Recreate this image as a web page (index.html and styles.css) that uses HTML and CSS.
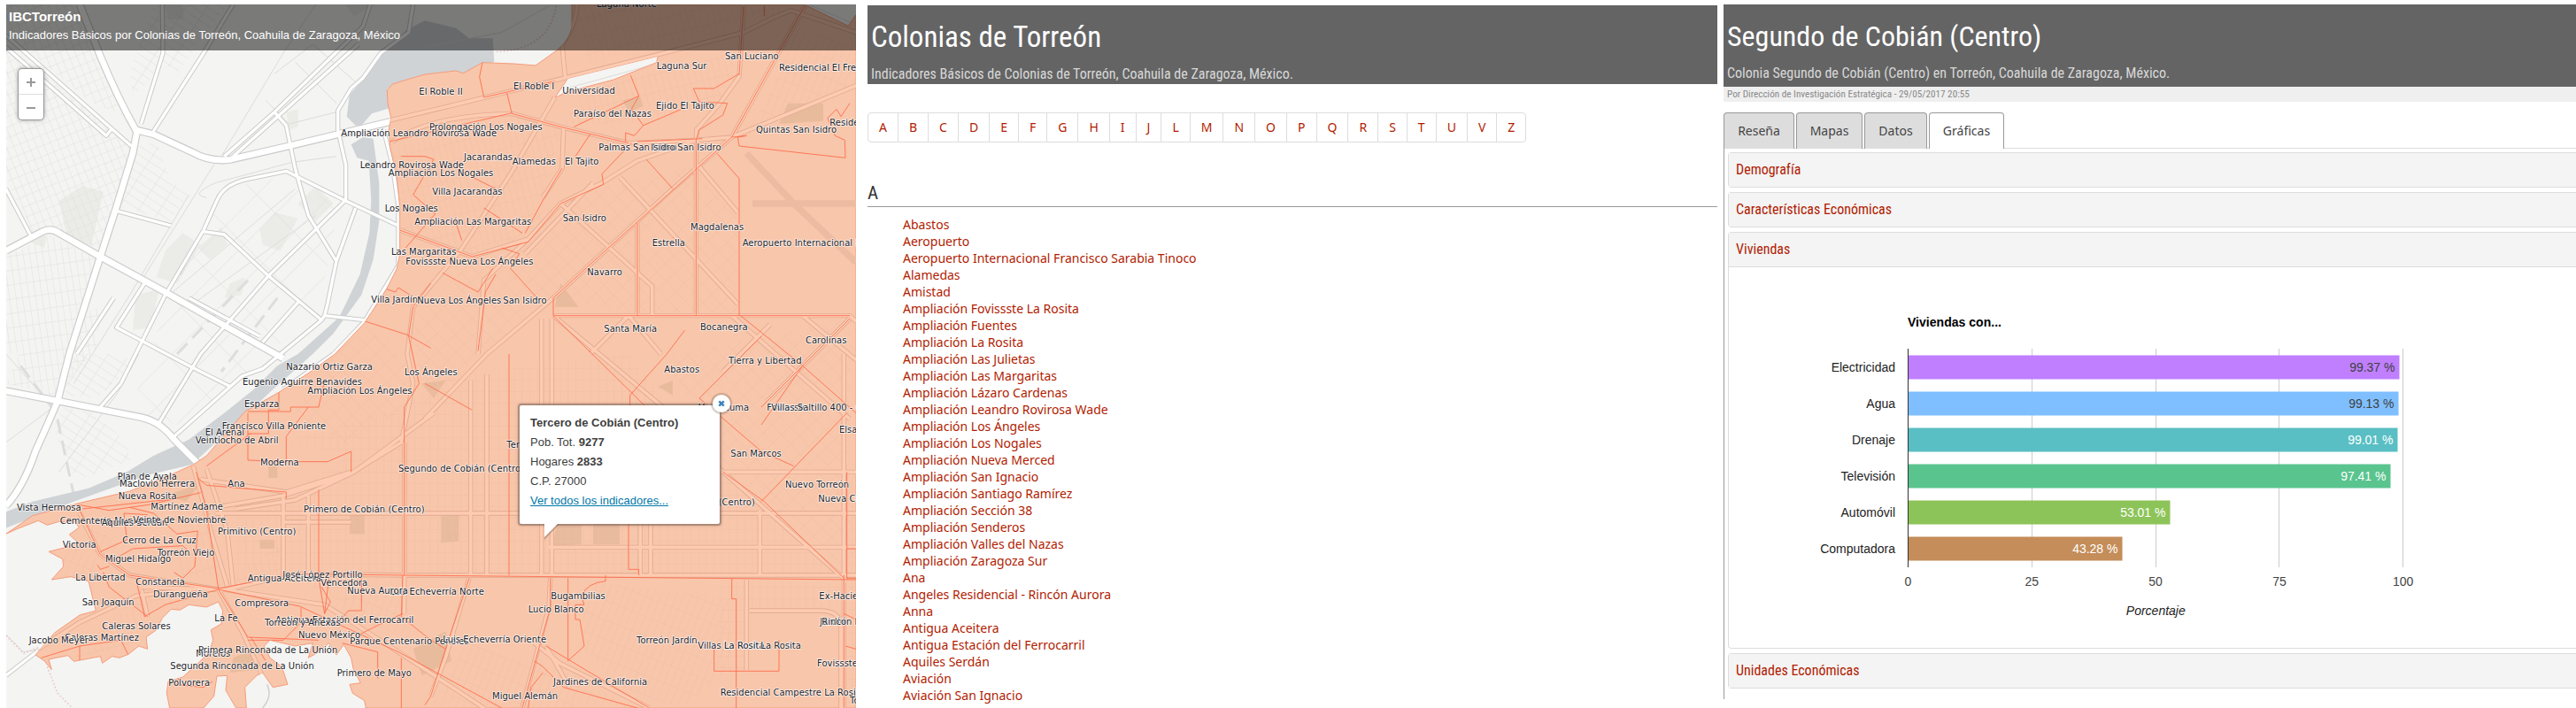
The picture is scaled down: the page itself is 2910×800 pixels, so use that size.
FILE: index.html
```html
<!DOCTYPE html>
<html lang="es">
<head>
<meta charset="utf-8">
<title>IBCTorreón</title>
<link rel="stylesheet" href="styles.css">
</head>
<body>
<main class="screens">
<section class="map-screen">
<svg class="map" viewBox="21 15 2880 2385" width="960" height="795">
<defs>
<pattern id="gridA" width="24" height="34" patternUnits="userSpaceOnUse" patternTransform="rotate(-22)"><path d="M0 0H24M0 0V34" class="lane"/></pattern>
<pattern id="gridB" width="22" height="48" patternUnits="userSpaceOnUse" patternTransform="rotate(-8)"><path d="M0 0H22M0 0V48" class="lane"/></pattern>
<pattern id="gridC" width="60" height="26" patternUnits="userSpaceOnUse" patternTransform="rotate(33)"><path d="M0 0H60M0 0V26" class="lane"/></pattern>
<pattern id="gridD" width="90" height="150" patternUnits="userSpaceOnUse" patternTransform="rotate(45)"><path d="M0 0H90M0 0V150" class="lane"/></pattern>
<pattern id="gridE" width="26" height="39" patternUnits="userSpaceOnUse"><path d="M0 0H26M0 0V39" class="olane"/></pattern>
<pattern id="gridF" width="40" height="46" patternUnits="userSpaceOnUse" patternTransform="rotate(-44)"><path d="M0 0H40M0 0V46" class="olane"/></pattern>
<pattern id="gridG" width="22" height="60" patternUnits="userSpaceOnUse" patternTransform="rotate(-14)"><path d="M0 0H22M0 0V60" class="olane"/></pattern>
<pattern id="gridH" width="24" height="62" patternUnits="userSpaceOnUse" patternTransform="rotate(22)"><path d="M0 0H24M0 0V62" class="olane"/></pattern>
<path id="land" fill-rule="evenodd" d="M1938 15V95Q1925 150 1860 190L1815 222 1740 216 1635 212 1570 248 1545 240 1440 252 1385 268 1330 285 1312 305 1314 350 1325 400 1318 440 1322 500 1345 600 1355 700V860L1345 910 1310 980 1235 1095 1135 1200 1060 1255 945 1330 830 1395 700 1545 655 1575 600 1600 440 1665 270 1705 110 1748 20 1810 60 1792 130 1765 160 1780 200 1768 255 1770 268 1788 235 1812 262 1838 225 1855 165 1870 212 1895 215 1920 175 1965 240 1955 300 1970 310 2010 325 2070 270 2085 235 2110 185 2145 120 2220 150 2240 175 2270 165 2235 230 2222 250 2242 340 2225 347 2248 380 2225 405 2230 435 2218 470 2190 500 2200 495 2160 530 2135 550 2095 580 2065 610 2068 640 2050 700 2058 740 2040 755 2070 750 2115 715 2135 722 2170 710 2210 680 2240 620 2295 570 2310 565 2350 575 2400H690L725 2360 735 2292 770 2290 765 2340 800 2400H835L830 2330 870 2290 890 2280 925 2330 975 2320 955 2260 915 2230 895 2190 915 2170 1000 2190 1060 2180 1045 2230 1080 2210 1115 2180 1140 2220 1165 2185 1190 2230 1198 2270 1222 2315 1185 2320 1195 2350 1235 2375 1240 2400H2901V50L2875 88 2725 15ZM1925 265 2230 190 2225 212 2080 270 1920 312 1880 332Z"/>
<clipPath id="landClip"><use href="#land" clip-rule="evenodd"/></clipPath>
<g id="westMajor"><path d="M270 15L340 190Q400 335 460 440L520 455 650 515Q710 550 780 541L1000 490 1325 412"/><path d="M465 440L450 520 395 700 340 870 235 1200 195 1360Q170 1420 120 1530 80 1650 20 1715"/><path d="M20 850L140 787Q170 770 200 790L340 870 560 990 700 1070 960 1215"/><path d="M20 1325L200 1360 480 1415Q545 1430 590 1490L670 1570"/></g>
<g id="westMinor"><path d="M550 15L552 180 478 420M790 15L690 180 520 445M20 120L445 495M20 160L360 460 376 440M1255 15L1230 90 930 380 760 530M1215 150L790 530M930 380L970 425 1000 570 1045 730 1140 885M1400 15L1385 110 1290 180 1230 265 1190 300 1145 375V440L1172 560V680"/><path d="M470 1180L560 1000 690 780 735 680Q760 620 850 605L970 580 1170 680 1350 765M690 785L760 795 910 935 1090 1085 1100 1070 1235 1085M1170 680L910 935 680 1200 535 1440M1205 705L1140 885 1110 1030 1100 1070M470 1180L410 1300 340 1380M395 715L580 765M20 640L105 800M490 960L395 1110 480 1155 640 1240 780 1310M385 1010L260 1200M1090 1085L890 1250 820 1275 590 1480M1010 1025L890 1160M1300 440L1330 560 1350 700V900L1235 1090 1130 1200 960 1320M640 1010L880 1140M20 2290L130 2205"/></g>
<g id="eastRoad"><path d="M1312 410L1480 370 1870 275 2230 185 2520 110 2620 60 2680 35 2901 110M1955 15Q1955 80 1905 150L1915 260M1330 480Q1460 390 1735 385L1900 430 2130 485 2360 475 2480 465 2901 290M2730 15L2480 465 2280 640 2040 860 1875 1010 1650 1200 1440 1420M2520 15L2505 260 2440 350 2360 440 2359 570V1070"/><path d="M1875 1070H2880L2901 1090M1355 780L1600 870 1790 810 1900 690 2040 620 2160 545 2360 475M1880 330L1730 590 1560 850 1400 1040 1380 1200 1400 1300 1360 1500 1180 1610 960 1680 700 1725M1910 430L1905 570 1840 670M1790 810L1640 950 1620 1200M1900 690L2210 970V1070M2100 600L2500 1030M2370 565L2500 720M2010 620L1780 860M2160 750V1070M1875 1070L2270 1400 2440 1590 2870 1970M2240 1200L2130 1070 2000 1200M2480 1070L2880 1420M2610 1100L2450 1260M2720 1070L2901 1220M2880 1080L2600 1360"/><path d="M960 1685V1950M1045 1680V1940M1370 1500V2080M1595 1290V1950M1650 1270V1950M1835 1080V1950M1870 1080V1950M2170 1500V1950M2205 1600V1950M2575 1730V1950M2860 1200V2400M730 1740H1370M960 1740H2901M960 1770H1190M1860 1855H2901M2440 1600H2901M1370 1950H2901M480 1990L760 2000 1000 1945 1370 1950"/><path d="M655 1580L720 1820 770 1985M700 1590L770 1800 790 1985M680 1625L970 1668 1190 1600M800 1725L1000 1695 1200 1600 1470 1400M270 1740L340 1880 440 1950 740 1998 820 2140 880 2270 905 2340M770 2000L1100 2050 1350 2210 1640 2400M130 2200L270 2110 460 2020 650 1998M1590 1960L1510 2230 1460 2360M1865 1960L1860 2060 1770 2400M1810 2180L1900 2250 2200 2400M2530 1965V2270M2540 2070H2780Q2845 2070 2850 2120V2400M1930 2330L1850 2190M480 2000L500 2090"/></g>
</defs>
<rect x="21" y="15" width="2880" height="2385" class="ground"/>
<g class="blocks"><path d="M1170 15h100l-70 40zM200 680l80-50 70 20-40 180-80-10zM560 850l60-60 60 40-80 130-70-20zM880 780l50-60 80 20-60 110-60-20zM1010 690l60-60 60 60-60 60zM970 380l40-10v60l-30 10zM100 790l60 10-10 40-50-20zM780 960l50-20-10 60-60 10zM670 840l80-70 20 60-60 50zM460 1000l80-20-30 130-60 10zM560 15l60 0 0 50-50 0z"/></g>
<path fill="url(#gridA)" d="M21 150L160 260 440 500 390 690 340 850 180 770 110 790 21 600ZM21 15H260L330 200 430 400 300 340 21 110Z"/>
<path fill="url(#gridB)" d="M21 870L170 800 330 880 240 1170 21 1200ZM90 1150L340 1040 330 1180 180 1340 21 1300Z"/>
<path fill="url(#gridC)" d="M240 1200L400 1200 460 1230 330 1350 220 1340ZM210 1380L320 1400 430 1500 440 1560 260 1630 190 1480ZM450 500L530 480 580 620 650 640 580 750 400 700ZM520 15L770 15 600 250 560 220 450 330 440 250Z"/>
<path fill="url(#gridD)" d="M760 640L960 600 1150 690 1080 1050 640 1450 440 1400 570 1010Z"/>
<path class="thin" d="M750 530L960 180 1070 15M640 660L440 1000 250 1300M730 550L480 950M700 670Q640 660 730 620L990 550 1140 530M930 250L1060 150 1230 300M1000 210L1140 350M900 340L980 420 1140 380M20 2150L80 2210 140 2200M20 1500L180 1380 20 1200M550 1020L1000 640M640 1040L1070 730M470 1200L400 1330 200 1600"/>
<path class="rail" d="M70 1240L190 1400 255 1700M660 830L610 930M840 950L600 1200M940 1010L750 1260"/>
<path class="water" d="M1380 100L1440 70 1545 95 1590 130 1670 130 1675 210 1570 248 1440 252 1312 300 1325 365 1260 385 1225 425 1205 425 1175 395 1185 320 1240 260 1290 180ZM1190 490L1230 465 1265 470 1285 620V750L1265 880 1225 1000 1130 1130 1060 1200 925 1320 840 1400 650 1575 500 1610 250 1700 20 1790V1735L110 1700 300 1655 430 1600 520 1545 640 1490 760 1400 860 1320 940 1240 1010 1200 1150 1075 1220 930 1252 790 1258 680 1250 545 1210 535Z"/>
<path class="trail" d="M1885 20Q1860 170 1680 175M21 2155L80 2215 130 2195M160 2260L195 2350 245 2400"/>
<use href="#westMinor" class="case-minor"/><use href="#westMajor" class="case-major"/><use href="#westMinor" class="fill-minor"/><use href="#westMajor" class="fill-major"/>
<path class="thin" d="M1920 300L2228 215M2740 15L2880 75M1440 160L1700 110 1860 20"/>
<use href="#land" class="land"/>
<g clip-path="url(#landClip)">
<path class="park" d="M2670 350h120v60l-150 10zM2110 340l60-10 10 30-50 20zM1185 1740h50v70h-50zM1495 1750l60-5v90l-60 5zM1885 1780h85v65l-95 5zM2010 1765h90v80h-90zM1400 2200l110-60 20 100-100 50zM910 1580h30v40h-30zM680 1640l-120 40 70 20zM1880 1040l20-80 60 80zM880 1830h50v30h-50zM1430 1300l80-10-40 60zM2230 1310l50-20v50zM790 2230l70-30 10 70-90 10z"/>
<path class="runway" d="M2530 520L2690 690 2901 890M2550 690H2901"/>
<path fill="url(#gridE)" d="M960 1500L1370 1380 1500 1280 2130 1200 2420 1580 2860 1960H960V1680L1190 1540ZM800 1720H960V1920L790 1940Z"/>
<path fill="url(#gridF)" d="M1100 1230L1240 1110 1380 1200 1370 1380 1180 1510 980 1400ZM1910 670L2360 560 2500 700V1060H2150L1880 1010 1640 1190 1440 1380 1390 1100 1600 880ZM2250 1210L2880 1080V1950L2450 1560Z"/>
<path fill="url(#gridG)" d="M1330 500L1735 390 1900 440 1840 660 1780 790 1600 860 1350 770ZM1950 20L2700 20 2460 110 1990 210ZM1990 300L2510 170 2430 360 2200 420 1900 420ZM730 1990L960 1840 960 1950ZM470 2000L720 2010 500 2080 440 2200 250 2230ZM590 1720L730 1740 760 1950 600 1960Z"/>
<path fill="url(#gridH)" d="M2000 1970L2470 2030 2480 2270 2300 2400 2100 2330 1960 2180ZM1580 2180L1980 2300 2130 2400H1460ZM2700 100L2901 150V280L2540 440ZM270 1760L430 1860 320 1880ZM1100 2060L1350 1960 1400 2170ZM230 1840L340 1900 320 2010 200 1950Z"/>
<path fill="url(#gridE)" d="M2430 1970H2850L2840 2060 2540 2060V2270H2430ZM1000 1960L1300 1960 1200 2060ZM2880 1580L2901 1700V2400H2870Z"/>
<use href="#eastRoad" class="case-east"/><use href="#eastRoad" class="fill-east"/>
<path class="limit" d="M1635 212L1625 260 1640 330 1880 275M1718 315L1735 385 1900 430 2130 485M1320 480L1735 383M2137 255L2165 325 1945 430M2165 325L2140 370 2180 425 2240 400 2310 370M2180 425L2150 460 2120 450V480M2505 250L2420 300 2350 300 2370 345 2465 350 2450 390 2370 440 2359 475V1070M2520 20L2505 255M2590 20V55M2730 15L2480 465 2040 860 1875 1010V1070M2480 465L2530 460 2500 465 2505 495 2865 535 2863 475 2830 460 2805 400 2835 370 2850 395 2880 350"/>
<path class="limit" d="M1360 530L1440 530 1470 540 1400 660 1475 725 1375 840M2160 480L2380 470M2000 455L1950 530M2140 485L2040 590 2045 625 1900 690 1790 820 1600 870 1355 780M1905 570L1845 670 1780 790M1600 600L1680 640M1640 705L1770 790M1540 740L1565 815M1700 840L1760 860 1730 910 1820 1010M1500 925L1620 990 1670 910M1310 980L1340 990 1350 975 1390 1000M1240 1090L1380 1135 1460 1180M1460 960L1400 1040 1385 1140 1420 1300 1370 1380 1370 1950M1620 1190L1645 990 1680 930M2160 755V1070M2430 520L2505 605V1070H1875M2505 1070H2880M2190 540L2280 640M1875 1070L2200 1390M1440 1300L1600 1390M2320 1120L2260 1200 2135 1340V1480M2510 1070L2720 1240 2901 1400M2580 1140L2370 1350 2580 1530 2690 1580M2880 1080L2580 1380M2720 1240L2580 1440M2870 1400L2580 1700"/>
<path class="limit" d="M945 1330V1390H910V1470H840V1560L970 1565 1110 1565 1190 1530V1600M840 1400V1470M970 1560V1480L1045 1380 985 1380 985 1395 840 1395M1045 1380L1080 1380 1100 1290M700 1580L740 1550 850 1470M670 1620L700 1645 970 1668V1690M665 1600L700 1730 740 1995M260 1710L370 1730 510 1710 680 1670M280 1725L600 1690M270 1730L340 1880 440 1950 740 1995 1000 1945 1370 1950 2901 1965M440 1720L520 1740 600 1810 670 1800 660 1920 620 1960 590 1940M340 1870L430 1830 420 1740 500 1745M380 1900L450 1860 620 1850 640 1870M370 1920L340 1930 330 1915M350 1940L370 1990 500 2090M460 1960L490 2090 560 2050 740 1998 840 2160 1080 2170M1080 1660V1960L1100 2080 1120 2040 1090 1990M740 1998L1015 2055 1350 2210 1700 2400M1020 2060V2110L960 2170H840M1225 1960V2070H1180L1140 2120M1365 2080L1280 2120 1220 2150M1160 2180L1280 2210V2300M1360 2230V2400M1365 1950L1360 2090 1460 2170 1510 2200M1115 1960L1100 2080M140 2230L270 2190 270 2240M270 2190L410 2170 435 2220M640 2260L590 2320 690 2330 720 2310M850 2160L900 2240"/>
<path class="limit" d="M1725 1200V1950M1590 1960L1510 2200 1460 2360 1440 2390M1865 1960V2060L1770 2400M1925 1960V2240L1980 2190 1965 2100H1950V2050H1980L1970 2020Q1990 1975 2052 1970V1950M2130 1760V1930H2165V1950M2480 1960V2030H2495V2270L2495 2400M2420 2200V2275H2640V2170M2860 1950V2400M2870 1600V1960H2901M2870 1860H2901M2860 2080L2901 2100M2865 2190L2901 2200M1850 2190L2200 2400M1810 2240L1840 2260 1910 2330 2160 2400M1840 2280L1800 2330 1790 2400M2450 1600L2590 1700 2860 1960"/>
</g>
<path class="road-edge" d="M905 2320Q925 2360 890 2400"/>
<g class="labels">
<text x="1420" y="321">El Roble II</text><text x="1156" y="462">Ampliación Leandro Rovirosa Wade</text><text x="1220" y="569">Leandro Rovirosa Wade</text><text x="1316" y="598">Ampliación Los Nogales</text><text x="1304" y="716">Los Nogales</text><text x="1405" y="761">Ampliación Las Margaritas</text><text x="1326" y="864">Las Margaritas</text><text x="1375" y="896">Fovissste Nueva Los Ángeles</text><text x="1258" y="1026">Villa Jardín</text><text x="1414" y="1028">Nueva Los Ángeles</text>
<g transform="translate(1440 0)"><text x="582" y="24">Laguna Norte</text><text x="300" y="304">El Roble I</text><text x="466" y="318">Universidad</text><text x="785" y="234">Laguna Sur</text><text x="1017" y="202">San Luciano</text><text x="1200" y="239">Residencial El Fresno</text><text x="504" y="395">Paraíso del Nazas</text><text x="783" y="368">Ejido El Tajito</text><text x="15" y="442">Prolongación Los Nogales</text><text x="1122" y="450">Quintas San Isidro</text><text x="1372" y="426">Residencial</text><text x="589" y="509">Palmas San Isidro</text><text x="766" y="509">Isidro</text><text x="856" y="510">San Isidro</text><text x="132" y="542">Jacarandas</text><text x="296" y="557">Alamedas</text><text x="474" y="557">El Tajito</text><text x="25" y="659">Villa Jacarandas</text><text x="467" y="751">San Isidro</text><text x="900" y="781">Magdalenas</text><text x="770" y="834">Estrella</text><text x="1076" y="835">Aeropuerto Internacional Francisco</text><text x="550" y="932">Navarro</text><text x="265" y="1030">San Isidro</text><text x="607" y="1125">Santa María</text><text x="933" y="1118">Bocanegra</text><text x="1290" y="1163">Carolinas</text></g>
<g transform="translate(0 1200)"><text x="970" y="54">Nazario Ortiz Garza</text><text x="822" y="104">Eugenio Aguirre Benavides</text><text x="1042" y="136">Ampliación Los Ángeles</text><text x="1371" y="71">Los Ángeles</text><text x="828" y="180">Esparza</text><text x="695" y="275">El Arenal</text><text x="752" y="254">Francisco Villa Poniente</text><text x="662" y="302">Veintiocho de Abril</text><text x="882" y="378">Moderna</text><text x="1350" y="398">Segundo de Cobián (Centro)</text><text x="398" y="425">Plan de Ayala</text><text x="405" y="450">Maclovio Herrera</text><text x="772" y="451">Ana</text><text x="401" y="491">Nueva Rosita</text><text x="57" y="530">Vista Hermosa</text><text x="511" y="529">Martínez Adame</text><text x="1029" y="536">Primero de Cobián (Centro)</text><text x="203" y="575">Cementerio Municipal</text><text x="344" y="583">Aquiles Serdán</text><text x="451" y="573">Veinte de Noviembre</text><text x="738" y="613">Primitivo (Centro)</text><text x="415" y="641">Cerro de La Cruz</text><text x="212" y="656">Victoria</text><text x="357" y="705">Miguel Hidalgo</text><text x="533" y="684">Torreón Viejo</text><text x="256" y="767">La Libertad</text><text x="460" y="783">Constancia</text><text x="839" y="771">Antigua Aceitera</text><text x="958" y="759">José López Portillo</text><text x="1087" y="786">Vencedora</text><text x="1319" y="817">Luis Echeverría Norte</text><text x="1177" y="812">Nueva Aurora</text><text x="519" y="824">Durangueña</text><text x="278" y="851">San Joaquín</text><text x="796" y="854">Compresora</text><text x="727" y="906">La Fe</text><text x="933" y="912">Antigua Estación del Ferrocarril</text><text x="897" y="920">Torreón y Anexas</text><text x="346" y="934">Caleras Solares</text><text x="219" y="972">Caleras Martínez</text><text x="98" y="980">Jacobo Meyer</text><text x="1011" y="963">Nuevo México</text><text x="1186" y="985">Parque Centenario Peñoles</text><text x="664" y="1026">Morelos</text><text x="672" y="1013">Primera Rinconada de La Unión</text><text x="577" y="1069">Segunda Rinconada de La Unión</text><text x="571" y="1125">Polvorera</text><text x="1142" y="1091">Primero de Mayo</text></g>
<g transform="translate(1440 1200)"><text x="1029" y="32">Tierra y Libertad</text><text x="811" y="64">Abastos</text><text x="925" y="191">Moctezuma</text><text x="1159" y="191">Fovissste</text><text x="1174" y="191">Villas Saltillo 400 - Oriente</text><text x="1404" y="267">Elsa Hernández</text><text x="277" y="319">Tercero de Cobián</text><text x="1036" y="348">San Marcos</text><text x="1221" y="454">Nuevo Torreón</text><text x="1333" y="501">Nueva California</text><text x="724" y="512">Cuarto de Cobián (Centro)</text><text x="427" y="830">Bugambilias</text><text x="1336" y="830">Ex-Hacienda</text><text x="350" y="876">Lucio Blanco</text><text x="1339" y="919">Jardín</text><text x="1345" y="919">Rincón La Rosita</text><text x="61" y="977">Luis Echeverría Oriente</text><text x="717" y="980">Torreón Jardín</text><text x="925" y="998">Villas La Rosita</text><text x="1014" y="998">La Rosita</text><text x="1138" y="998">La Rosita</text><text x="1329" y="1060">Fovissste</text><text x="435" y="1122">Jardines de California</text><text x="1001" y="1159">Residencial Campestre La Rosita</text><text x="228" y="1170">Miguel Alemán</text><text x="1440" y="1186">Torreón</text></g>
</g>
</svg>
<div class="map-title"><h1>IBCTorreón</h1><p>Indicadores Básicos por Colonias de Torreón, Coahuila de Zaragoza, México</p></div>
<div class="zoom"><svg class="zoom-icon" viewBox="0 0 28 28"><path d="M9 15h10M14 10v10"/></svg><svg class="zoom-icon" viewBox="0 0 28 28"><path d="M9 15h10"/></svg></div>
<div class="popup">
<p><b>Tercero de Cobián (Centro)</b></p><p>Pob. Tot. <b>9277</b></p><p>Hogares <b>2833</b></p><p>C.P. 27000</p><p><a href="#">Ver todos los indicadores...</a></p>
<svg class="popup-tip" viewBox="0 0 18 20"><path class="tip-shade" d="M1 0L1 18 18 0"/><path class="tip-fill" d="M1 0V15L16 0Z"/></svg>
<svg class="popup-close" viewBox="0 0 20 20"><path d="M7.3 7.3l5.4 5.4M12.7 7.3l-5.4 5.4"/></svg>
</div>
</section>

<section class="list-screen">
<header class="banner"><h1>Colonias de Torreón</h1><p>Indicadores Básicos de Colonias de Torreón, Coahuila de Zaragoza, México.</p></header>
<nav class="letters"><a>A</a><a>B</a><a>C</a><a>D</a><a>E</a><a>F</a><a>G</a><a>H</a><a>I</a><a>J</a><a>L</a><a>M</a><a>N</a><a>O</a><a>P</a><a>Q</a><a>R</a><a>S</a><a>T</a><a>U</a><a>V</a><a>Z</a></nav>
<h2 class="letter-heading">A</h2>
<ul class="names"><li>Abastos</li><li>Aeropuerto</li><li>Aeropuerto Internacional Francisco Sarabia Tinoco</li><li>Alamedas</li><li>Amistad</li><li>Ampliación Fovissste La Rosita</li><li>Ampliación Fuentes</li><li>Ampliación La Rosita</li><li>Ampliación Las Julietas</li><li>Ampliación Las Margaritas</li><li>Ampliación Lázaro Cardenas</li><li>Ampliación Leandro Rovirosa Wade</li><li>Ampliación Los Ángeles</li><li>Ampliación Los Nogales</li><li>Ampliación Nueva Merced</li><li>Ampliación San Ignacio</li><li>Ampliación Santiago Ramírez</li><li>Ampliación Sección 38</li><li>Ampliación Senderos</li><li>Ampliación Valles del Nazas</li><li>Ampliación Zaragoza Sur</li><li>Ana</li><li>Angeles Residencial - Rincón Aurora</li><li>Anna</li><li>Antigua Aceitera</li><li>Antigua Estación del Ferrocarril</li><li>Aquiles Serdán</li><li>Aviación</li><li>Aviación San Ignacio</li></ul>
</section>

<section class="detail-screen">
<header class="banner"><h1>Segundo de Cobián (Centro)</h1><p>Colonia Segundo de Cobián (Centro) en Torreón, Coahuila de Zaragoza, México.</p></header>
<p class="byline">Por Dirección de Investigación Estratégica - 29/05/2017 20:55</p>
<nav class="tabs"><a class="tab tab-resena">Reseña</a><a class="tab tab-mapas">Mapas</a><a class="tab tab-datos">Datos</a><a class="tab tab-active">Gráficas</a></nav>
<div class="tab-body">
<div class="card"><h3>Demografía</h3></div>
<div class="card"><h3>Características Económicas</h3></div>
<div class="card"><h3>Viviendas</h3>
<svg class="chart" width="957" height="430" viewBox="1953 302 957 430">
<text class="chart-title" x="2155" y="369" textLength="106">Viviendas con...</text>
<path class="grid" d="M2295.5 394V641M2435.5 394V641M2574.5 394V641M2714.5 394V641"/>
<g><rect x="2156" y="401.5" width="554.5" height="27" fill="#bf7fff"/><rect x="2156" y="442.5" width="553.5" height="27" fill="#7fbfff"/><rect x="2156" y="483.5" width="552.5" height="27" fill="#59bfc4"/><rect x="2156" y="524.5" width="544.5" height="27" fill="#59c48e"/><rect x="2156" y="565.5" width="295.5" height="27" fill="#8dc459"/><rect x="2156" y="606.5" width="241.5" height="27" fill="#c48d59"/></g>
<path class="axis" d="M2155.5 394V641"/>
<g class="cats"><text x="2141" y="420">Electricidad</text><text x="2141" y="461">Agua</text><text x="2141" y="502">Drenaje</text><text x="2141" y="543">Televisión</text><text x="2141" y="584">Automóvil</text><text x="2141" y="625">Computadora</text></g>
<g class="vals"><text class="dark" x="2705.5" y="420">99.37 %</text><text class="dark" x="2704.5" y="461">99.13 %</text><text x="2703.5" y="502">99.01 %</text><text x="2695.5" y="543">97.41 %</text><text x="2446.5" y="584">53.01 %</text><text x="2392.5" y="625">43.28 %</text></g>
<g class="ticks"><text x="2155.5" y="662">0</text><text x="2295.3" y="662">25</text><text x="2435" y="662">50</text><text x="2575" y="662">75</text><text x="2714.7" y="662">100</text></g>
<text class="axis-title" x="2435.3" y="695">Porcentaje</text>
</svg>
</div>
<div class="card"><h3>Unidades Económicas</h3></div>
</div>
</section>
</main>
</body>
</html>
```
FILE: styles.css
```css
*{box-sizing:border-box}
body{margin:0;background:#fff;overflow:hidden}
h1,h2,h3,p,ul{margin:0;padding:0;font-weight:400}
.screens{display:grid;grid-template-columns:960px 960px 963px;column-gap:0;padding-left:7px;height:800px;overflow:hidden}
.map-screen{position:relative;margin-top:5px;height:795px;overflow:hidden}
.map{display:block}
.ground{fill:#f4f4f2}
.water{fill:#cfd3d6}
.blocks{fill:#ebece7}
.lane{fill:none;stroke:#dfdfde;stroke-width:3}
.olane{fill:none;stroke:#efbda3;stroke-width:2.4}
.thin{fill:none;stroke:#dcdcdb;stroke-width:3}
.rail{fill:none;stroke:#dcdddd;stroke-width:9;stroke-dasharray:50 24}
.trail{fill:none;stroke:#e8c8c8;stroke-width:5;stroke-dasharray:5 7}
.case-minor,.fill-minor,.case-major,.fill-major,.case-east,.fill-east{fill:none;stroke-linejoin:round}
.case-minor{stroke:#cbcbcb;stroke-width:16}
.fill-minor{stroke:#fff;stroke-width:10}
.case-major{stroke:#cbcbcb;stroke-width:27}
.fill-major{stroke:#fff;stroke-width:20}
.road-edge{fill:none;stroke:#ccc;stroke-width:4}
.land{fill:#f8c6ab;stroke:#f59c7c;stroke-width:3}
.park{fill:#e9bb9d}
.runway{fill:none;stroke:#edbba1;stroke-width:22}
.case-east{stroke:#e0ab90;stroke-width:16}
.fill-east{stroke:#fdcbb1;stroke-width:11}
.limit{fill:none;stroke:#ff6b4a;stroke-width:2.6}
.labels{font:30px "DejaVu Sans",sans-serif;fill:#1d2429;stroke:#fff;stroke-opacity:.75;stroke-width:5;stroke-linejoin:round;paint-order:stroke}
.map-title{position:absolute;inset:0 0 auto 0;height:52px;background:rgba(0,0,0,.5);color:#fff;font-family:"Liberation Sans",Arial,sans-serif;padding:4px 3px}
.map-title h1{font-size:15px;font-weight:700;line-height:20px}
.map-title p{font-size:13px;line-height:21px}
.zoom{position:absolute;left:14px;top:73px;width:28px;height:57px;background:#fff;border-radius:4px;box-shadow:0 0 0 1px #999,0 0 4px 1px rgba(0,0,0,.3)}
.zoom-icon{display:block;width:28px;height:28px;fill:none;stroke:#999;stroke-width:2}
.zoom-icon+.zoom-icon{border-top:1px solid #ddd;height:29px}
.popup{position:absolute;left:580px;top:453px;width:226px;height:134px;padding:9px 12px;background:#fff;border-radius:2px;box-shadow:0 0 0 2px rgba(110,90,80,.35),0 0 3px 2px rgba(80,60,50,.3);font:13px/22px "Liberation Sans",Arial,sans-serif;color:#404040}
.popup a{color:#0078a8;text-decoration:underline}
.popup-tip{position:absolute;left:27px;top:134px;width:18px;height:20px}
.tip-fill{fill:#fff}
.tip-shade{fill:rgba(110,90,80,.4)}
.popup-close{position:absolute;left:218px;top:-12px;width:20px;height:20px;border-radius:50%;background:#fff;box-shadow:0 0 1px 2px rgba(110,90,80,.3);fill:none;stroke:#3b86bd;stroke-width:2.4}
.list-screen{margin-left:13px;width:960px}
.banner{background:#646464;color:#fff;font-family:"Roboto Condensed",Roboto,sans-serif;font-stretch:75%}
.list-screen .banner{margin-top:6px;height:89px;padding:18px 4px 0}
.banner h1{font-size:32px;line-height:36px;white-space:nowrap}
.list-screen .banner h1{font-size:33px}
.banner p{font-size:16px;line-height:20px;margin-top:14px;color:#d8d8d8;white-space:nowrap}
.detail-screen .banner{height:93px;padding:18px 4px 0}
.letters{display:inline-flex;margin-top:32px;height:34px;border:1px solid #ddd;border-radius:4px;font:14px/32px "Noto Sans",sans-serif;color:#b11b00}
.letters a{padding:0 12px;border-right:1px solid #ddd}
.letters a:last-child{border-right:0}
.letter-heading{margin-top:38px;height:35px;border-bottom:1px solid #999;font:21px/38px "Roboto Condensed",Roboto,sans-serif;font-stretch:75%;color:#333}
.names{list-style:none;margin-top:10px;padding-left:40px;font:14px/19px "Noto Sans",sans-serif;color:#b11b00}
.detail-screen{margin-left:20px;margin-top:5px;width:963px}
.byline{height:17px;background:#efefef;padding-left:4px;font:11.2px/17px "Roboto Condensed",Roboto,sans-serif;font-stretch:75%;color:#888}
.tabs{display:flex;gap:2px;margin-top:12px;height:41px;font:14px/39px "Noto Sans",sans-serif;color:#444;border-bottom:1px solid #ddd}
.tab{height:41px;text-align:center;background:#ddd;border:1px solid #999;border-bottom:0;border-radius:4px 4px 0 0}
.tab-resena{width:80px}.tab-mapas{width:75px}.tab-datos{width:71px}
.tab-active{width:85px;background:#fff}
.tab-body{height:622px;border-left:1px solid #999;padding:4px 0 0 4px;display:flex;flex-direction:column;gap:5px}
.card{border:1px solid #ddd;border-right:0;border-radius:4px 0 0 4px}
.card h3{height:38px;padding-left:8px;background:#f4f4f4;color:#b11b00;font:16px/38px "Roboto Condensed",Roboto,sans-serif;font-stretch:75%}
.card h3:not(:last-child){border-bottom:1px solid #ddd;height:39px}
.chart{display:block;font:14px "Liberation Sans",Arial,sans-serif}
.chart-title{font-weight:700;fill:#000}
.grid{stroke:#ccc}.axis{stroke:#333}
.cats{text-anchor:end;fill:#222}
.vals{text-anchor:end;fill:#fff}
.dark{fill:#404040}
.ticks{text-anchor:middle;fill:#444}
.axis-title{text-anchor:middle;font-style:italic;fill:#222}
```
